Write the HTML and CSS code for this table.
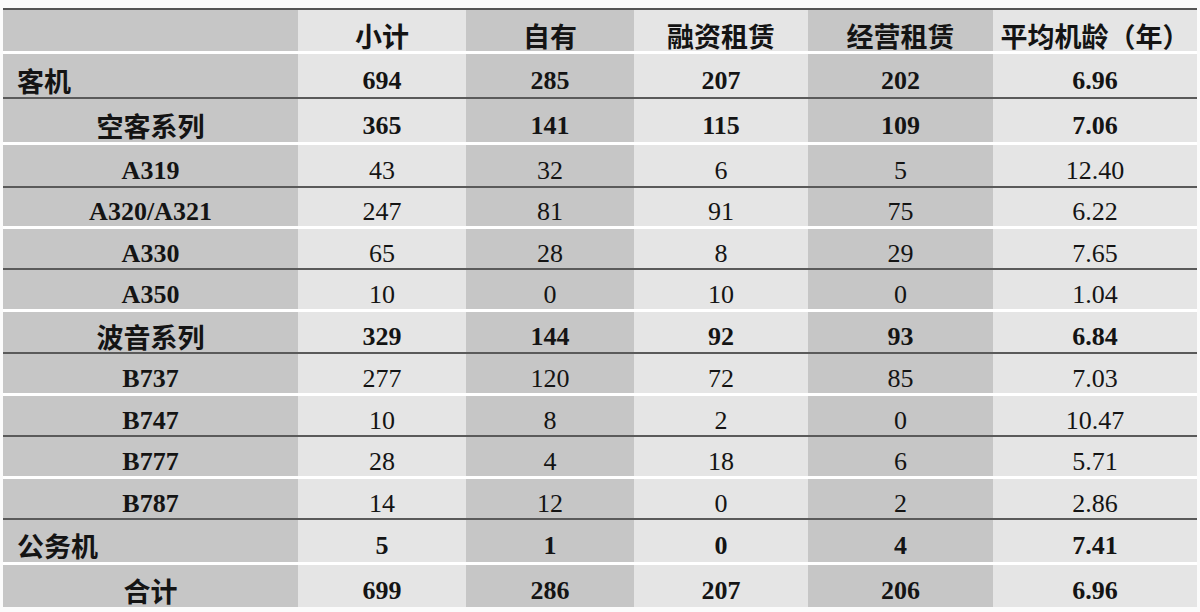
FILE: index.html
```html
<!DOCTYPE html>
<html lang="zh-CN">
<head>
<meta charset="utf-8">
<title>机队构成</title>
<link rel="stylesheet" href="styles.css">
</head>
<body>
<div class="sheet">
  <div class="row head h41 sep-w">
    <div class="c dk"></div>
    <div class="c lt">小计</div>
    <div class="c dk">自有</div>
    <div class="c lt">融资租赁</div>
    <div class="c dk">经营租赁</div>
    <div class="c lt">平均机龄（年）</div>
  </div>
  <div class="row bold h43 sep-d">
    <div class="c dk lbl left">客机</div>
    <div class="c lt">694</div>
    <div class="c dk">285</div>
    <div class="c lt">207</div>
    <div class="c dk">202</div>
    <div class="c lt">6.96</div>
  </div>
  <div class="row bold h43 sep-w">
    <div class="c dk lbl">空客系列</div>
    <div class="c lt">365</div>
    <div class="c dk">141</div>
    <div class="c lt">115</div>
    <div class="c dk">109</div>
    <div class="c lt">7.06</div>
  </div>
  <div class="row h41 sep-d">
    <div class="c dk model">A319</div>
    <div class="c lt">43</div>
    <div class="c dk">32</div>
    <div class="c lt">6</div>
    <div class="c dk">5</div>
    <div class="c lt">12.40</div>
  </div>
  <div class="row h38 sep-w">
    <div class="c dk model">A320/A321</div>
    <div class="c lt">247</div>
    <div class="c dk">81</div>
    <div class="c lt">91</div>
    <div class="c dk">75</div>
    <div class="c lt">6.22</div>
  </div>
  <div class="row h39 sep-d">
    <div class="c dk model">A330</div>
    <div class="c lt">65</div>
    <div class="c dk">28</div>
    <div class="c lt">8</div>
    <div class="c dk">29</div>
    <div class="c lt">7.65</div>
  </div>
  <div class="row h39 sep-w">
    <div class="c dk model">A350</div>
    <div class="c lt">10</div>
    <div class="c dk">0</div>
    <div class="c lt">10</div>
    <div class="c dk">0</div>
    <div class="c lt">1.04</div>
  </div>
  <div class="row bold h40 sep-d">
    <div class="c dk lbl">波音系列</div>
    <div class="c lt">329</div>
    <div class="c dk">144</div>
    <div class="c lt">92</div>
    <div class="c dk">93</div>
    <div class="c lt">6.84</div>
  </div>
  <div class="row h39 sep-w">
    <div class="c dk model">B737</div>
    <div class="c lt">277</div>
    <div class="c dk">120</div>
    <div class="c lt">72</div>
    <div class="c dk">85</div>
    <div class="c lt">7.03</div>
  </div>
  <div class="row h39 sep-d">
    <div class="c dk model">B747</div>
    <div class="c lt">10</div>
    <div class="c dk">8</div>
    <div class="c lt">2</div>
    <div class="c dk">0</div>
    <div class="c lt">10.47</div>
  </div>
  <div class="row h39 sep-w">
    <div class="c dk model">B777</div>
    <div class="c lt">28</div>
    <div class="c dk">4</div>
    <div class="c lt">18</div>
    <div class="c dk">6</div>
    <div class="c lt">5.71</div>
  </div>
  <div class="row h39 sep-d">
    <div class="c dk model">B787</div>
    <div class="c lt">14</div>
    <div class="c dk">12</div>
    <div class="c lt">0</div>
    <div class="c dk">2</div>
    <div class="c lt">2.86</div>
  </div>
  <div class="row bold h42 sep-w">
    <div class="c dk lbl left">公务机</div>
    <div class="c lt">5</div>
    <div class="c dk">1</div>
    <div class="c lt">0</div>
    <div class="c dk">4</div>
    <div class="c lt">7.41</div>
  </div>
  <div class="row bold h42">
    <div class="c dk lbl">合计</div>
    <div class="c lt">699</div>
    <div class="c dk">286</div>
    <div class="c lt">207</div>
    <div class="c dk">206</div>
    <div class="c lt">6.96</div>
  </div>
</div>
</body>
</html>
```

FILE: styles.css
```css
* { box-sizing: content-box; }

body {
  margin: 0;
  background: #fbfbfb;
  font-family: "Liberation Serif", "Times New Roman", serif;
  color: #141414;
}

.sheet {
  margin: 8px 0 0 3px;
  width: 1194px;
  border-top: 2px solid #555555;
}

.row {
  display: grid;
  grid-template-columns: 295px 168px 168px 174px 185px 204px;
}

.h38 { height: 38px; }
.h39 { height: 39px; }
.h40 { height: 40px; }
.h41 { height: 41px; }
.h42 { height: 42px; }
.h43 { height: 43px; }

.sep-w { border-bottom: 3px solid #ffffff; }
.sep-d { border-bottom: 2px solid #5a5a5a; }

.c {
  display: flex;
  align-items: center;
  justify-content: center;
  padding-top: 10px;
  font-size: 26px;
  line-height: 26px;
  white-space: nowrap;
}

.dk { background: #c6c6c6; }
.lt { background: #e5e5e5; }

.head .c,
.lbl {
  font-family: "Noto Sans CJK SC", "Noto Sans", sans-serif;
  font-weight: 700;
  font-size: 27px;
}

.bold .c { font-weight: 700; }

.model { font-weight: 700; }

.left {
  justify-content: flex-start;
  padding-left: 14px;
}
```
